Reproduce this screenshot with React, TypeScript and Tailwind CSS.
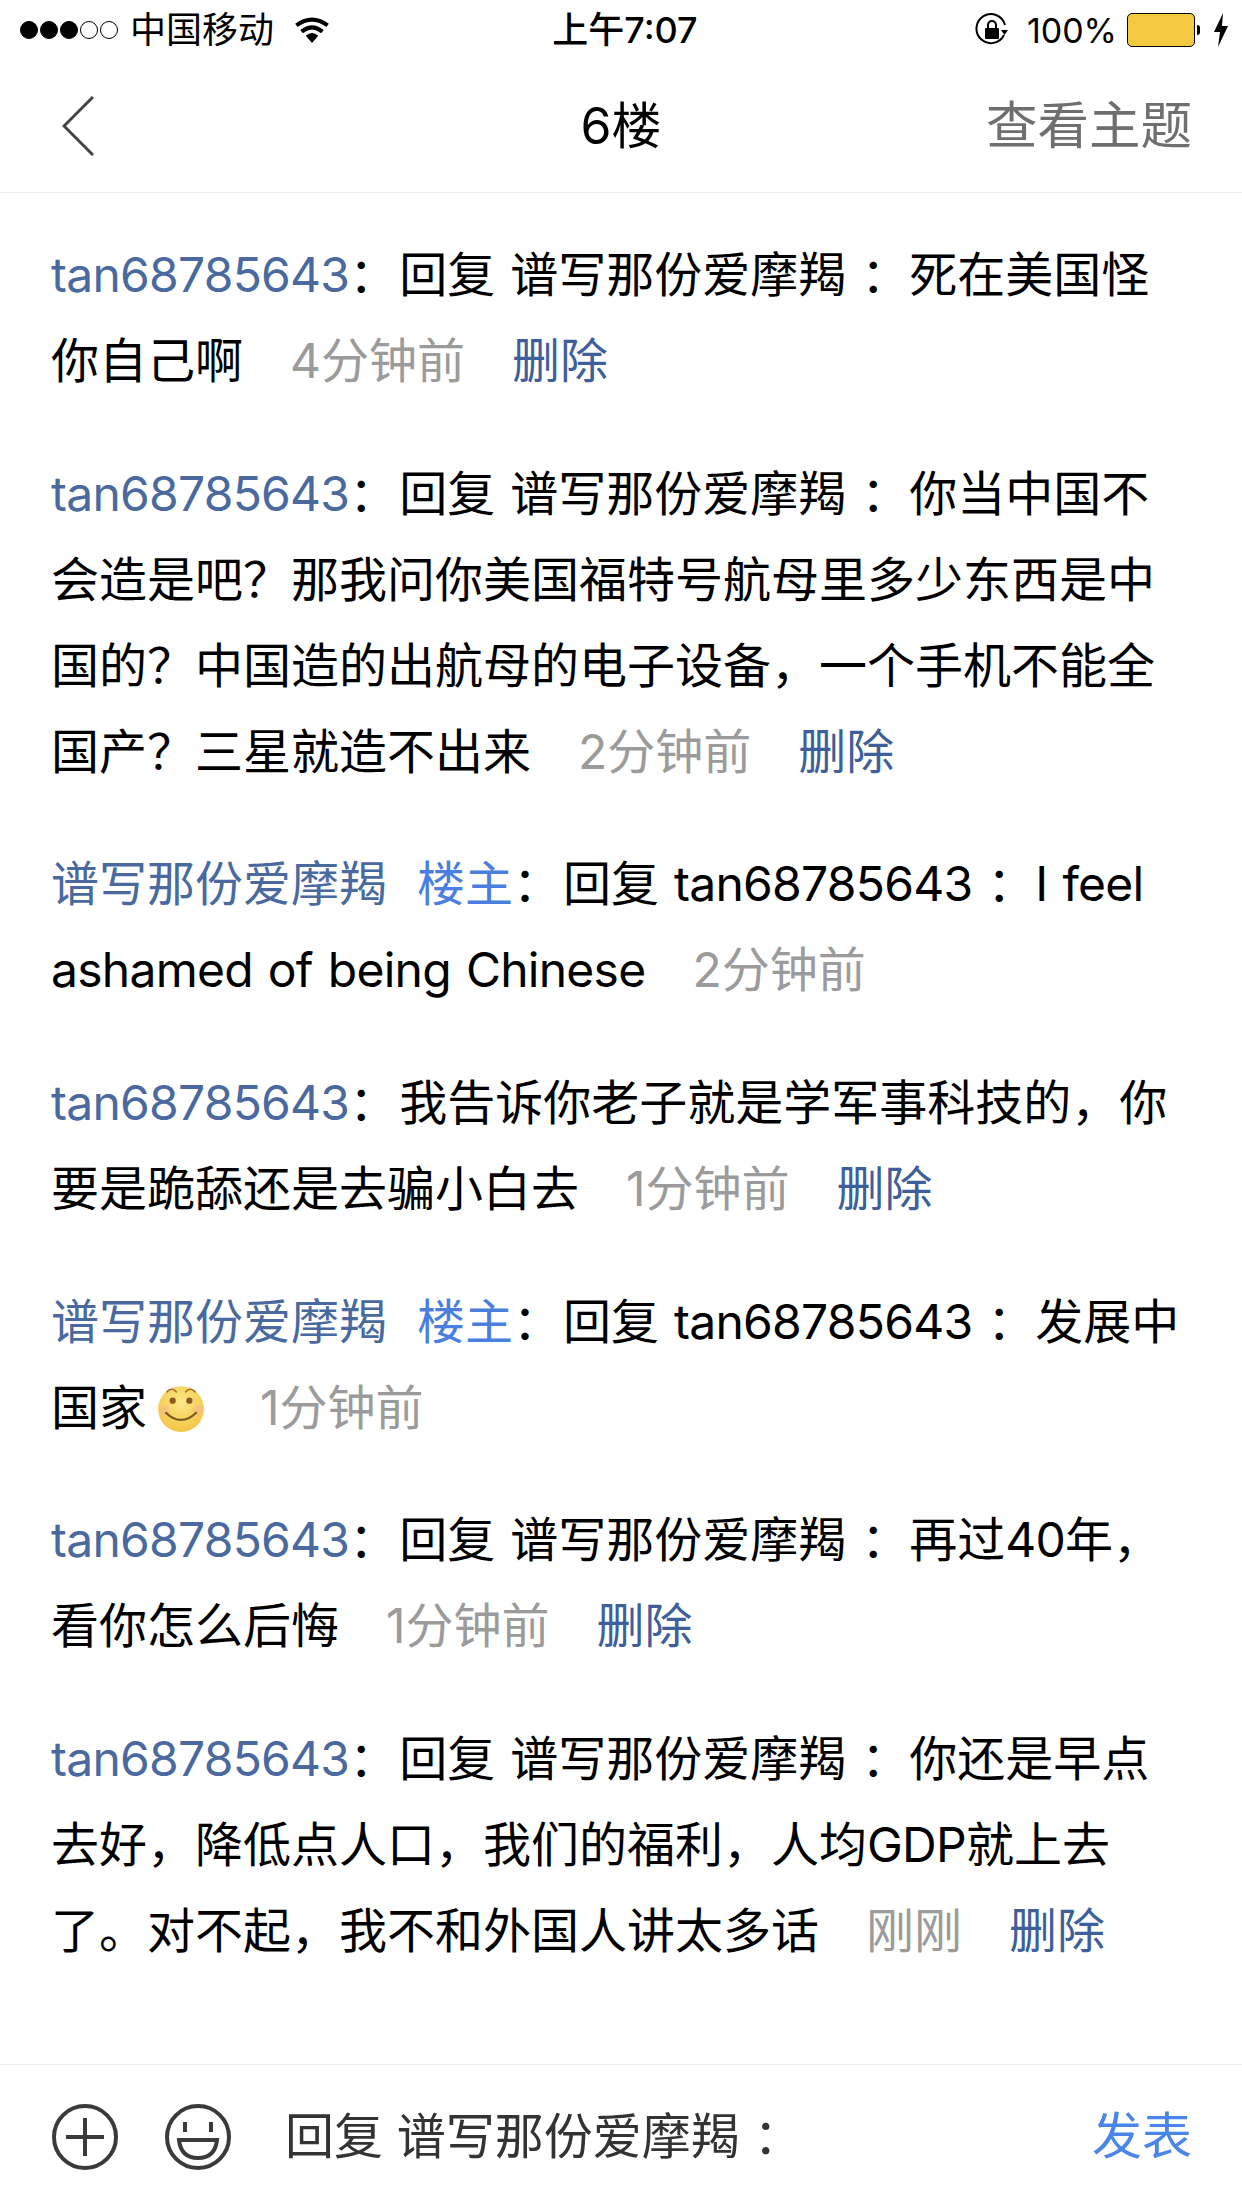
import { Fragment, ReactNode } from "react";

const FONT = "font-['Inter','Noto_Sans_CJK_SC',sans-serif]";

interface Comment {
  author: string;
  op?: boolean;
  lines: ReactNode[];
  time: string;
  canDelete?: boolean;
}

const OP = "谱写那份爱摩羯";
const ME = "tan68785643";

// Inter is a bit wider than the reference's latin glyphs, so only latin runs get tightened
function Txt({ children }: { children: string }) {
  return (
    <>
      {children.split(/([A-Za-z0-9]+)/).map((part, i) =>
        i % 2 ? (
          <span key={i} className="tracking-[-0.75px]">
            {part}
          </span>
        ) : (
          <Fragment key={i}>{part}</Fragment>
        ),
      )}
    </>
  );
}

const comments: Comment[] = [
  { author: ME, lines: [`回复 ${OP} ：死在美国怪`, "你自己啊"], time: "4分钟前", canDelete: true },
  {
    author: ME,
    lines: [`回复 ${OP} ：你当中国不`, "会造是吧？那我问你美国福特号航母里多少东西是中", "国的？中国造的出航母的电子设备，一个手机不能全", "国产？三星就造不出来"],
    time: "2分钟前",
    canDelete: true,
  },
  { author: OP, op: true, lines: [`回复 ${ME} ：I feel`, "ashamed of being Chinese"], time: "2分钟前" },
  { author: ME, lines: ["我告诉你老子就是学军事科技的，你", "要是跪舔还是去骗小白去"], time: "1分钟前", canDelete: true },
  { author: OP, op: true, lines: [`回复 ${ME} ：发展中`, <>国家<Smiley /></>], time: "1分钟前" },
  { author: ME, lines: [`回复 ${OP} ：再过40年，`, "看你怎么后悔"], time: "1分钟前", canDelete: true },
  {
    author: ME,
    lines: [`回复 ${OP} ：你还是早点`, "去好，降低点人口，我们的福利，人均GDP就上去", "了。对不起，我不和外国人讲太多话"],
    time: "刚刚",
    canDelete: true,
  },
];

function Smiley() {
  return (
    <svg viewBox="0 0 48 48" className="inline-block w-[50px] h-[50px] ml-[9px] mr-[7px] align-[-8px]">
      <defs>
        <radialGradient id="face" cx="50%" cy="35%" r="65%">
          <stop offset="0%" stopColor="#fde88a" />
          <stop offset="100%" stopColor="#f3c544" />
        </radialGradient>
      </defs>
      <circle cx="24" cy="25" r="22" fill="url(#face)" />
      <circle cx="8" cy="26" r="5" fill="#f5b98a" opacity="0.6" />
      <circle cx="40" cy="26" r="5" fill="#f5b98a" opacity="0.6" />
      <circle cx="16" cy="17" r="3" fill="#8a5a20" />
      <circle cx="32" cy="17" r="3" fill="#8a5a20" />
      <path d="M10 9 q5 -6 10 0 M28 9 q5 -6 10 0" fill="none" stroke="#a8742a" strokeWidth="1.5" />
      <path d="M9 28 q15 15 30 0" fill="none" stroke="#7a5a20" strokeWidth="2" />
    </svg>
  );
}

function StatusBar() {
  return (
    <div className="h-[60px] pl-[20px] pr-[12px] flex items-center justify-between text-[36px] text-black">
      <div className="flex items-center w-[400px]">
        <div className="flex gap-[2px]">
          {[1, 1, 1, 0, 0].map((on, i) => (
            <span key={i} className={`w-[18px] h-[18px] rounded-full border border-black ${on ? "bg-black" : ""}`} />
          ))}
        </div>
        <span className="ml-[12px]">中国移动</span>
        <svg viewBox="0 0 34 26" className="ml-[20px] w-[36px] h-[27px]">
          <path d="M2 8 Q17 -3 32 8 M7 14 Q17 6 27 14" fill="none" stroke="#000" strokeWidth="4" />
          <path d="M11 18 Q17 13 23 18 L17 25 Z" fill="#000" />
        </svg>
      </div>
      <span className="font-medium">上午7:07</span>
      <div className="flex items-center justify-end w-[400px]">
        <svg viewBox="0 0 34 34" className="w-[34px] h-[34px]">
          <path d="M29 22 A14.5 14.5 0 1 1 30 12" fill="none" stroke="#000" strokeWidth="2" />
          <path d="M26 17 L33 17 L29.5 22 Z" fill="#000" />
          <rect x="10" y="15" width="14" height="11" rx="1" fill="#000" />
          <path d="M13 15 v-3 a4 4 0 0 1 8 0 v3" fill="none" stroke="#000" strokeWidth="2" />
        </svg>
        <span className="ml-[18px] text-[34px]">100%</span>
        <div className="ml-[10px] w-[68px] h-[34px] rounded-[5px] border border-black bg-[#f5c842]" />
        <span className="w-[3px] h-[10px] ml-[2px] bg-black rounded-r-full" />
        <svg viewBox="0 0 16 34" className="ml-[12px] w-[18px] h-[34px]">
          <path d="M10 0 L1 19 L7 19 L5 34 L15 13 L9 13 Z" fill="#000" />
        </svg>
      </div>
    </div>
  );
}

function NavBar() {
  return (
    <div className="h-[133px] px-[56px] grid grid-cols-3 items-center border-b border-[#eeeeee]">
      <svg viewBox="0 0 32 60" className="ml-[6px] w-[32px] h-[60px]">
        <path d="M31 1 L2 30 L31 59" fill="none" stroke="#444" strokeWidth="3" />
      </svg>
      <div className="text-center text-[50px] text-black">6楼</div>
      <div className="text-right mr-[-6px] text-[51.5px] text-[#6f6f6f]">查看主题</div>
    </div>
  );
}

function CommentItem({ comment }: { comment: Comment }) {
  return (
    <div className="leading-[86px] whitespace-nowrap text-[48px] text-black [word-spacing:1.5px]">
      <span className="text-[#4a6a9f]">
        <Txt>{comment.author}</Txt>
      </span>
      {comment.op && <span className="ml-[30px] text-[#4a7fe0]">楼主</span>}
      <span className="mr-[2px]">：</span>
      {comment.lines.map((line, i) => (
        <Fragment key={i}>
          {i > 0 && <br />}
          {typeof line === "string" ? <Txt>{line}</Txt> : line}
        </Fragment>
      ))}
      <span className="ml-[47px] text-[#9b9b9b]">{comment.time}</span>
      {comment.canDelete && <span className="ml-[47px] text-[#3f5f9b]">删除</span>}
    </div>
  );
}

function InputBar() {
  return (
    <div className="h-[144px] pl-[52px] pr-[50px] flex items-center border-t border-[#eeeeee]">
      <svg viewBox="0 0 66 66" className="w-[66px] h-[66px]">
        <circle cx="33" cy="33" r="31" fill="none" stroke="#3a3a3a" strokeWidth="4" />
        <path d="M33 14 V52 M14 33 H52" stroke="#3a3a3a" strokeWidth="4" />
      </svg>
      <svg viewBox="0 0 66 66" className="ml-[47px] w-[66px] h-[66px]">
        <circle cx="33" cy="33" r="31" fill="none" stroke="#3a3a3a" strokeWidth="4" />
        <path d="M20 18 V28 M46 18 V28" stroke="#3a3a3a" strokeWidth="4" />
        <path d="M14 36 H52 Q50 54 33 54 Q16 54 14 36 Z" fill="none" stroke="#3a3a3a" strokeWidth="4" />
      </svg>
      <span className="ml-[54px] text-[49px] text-[#333333]">{`回复 ${OP} ：`}</span>
      <span className="ml-auto text-[50px] text-[#4a86e8]">发表</span>
    </div>
  );
}

export default function App() {
  return (
    <div className={`w-[1242px] h-[2208px] bg-white flex flex-col overflow-hidden ${FONT}`}>
      <StatusBar />
      <NavBar />
      <div className="flex-1 pl-[51px] pt-[39px] flex flex-col gap-[46.7px]">
        {comments.map((c, i) => (
          <CommentItem key={i} comment={c} />
        ))}
      </div>
      <InputBar />
    </div>
  );
}
